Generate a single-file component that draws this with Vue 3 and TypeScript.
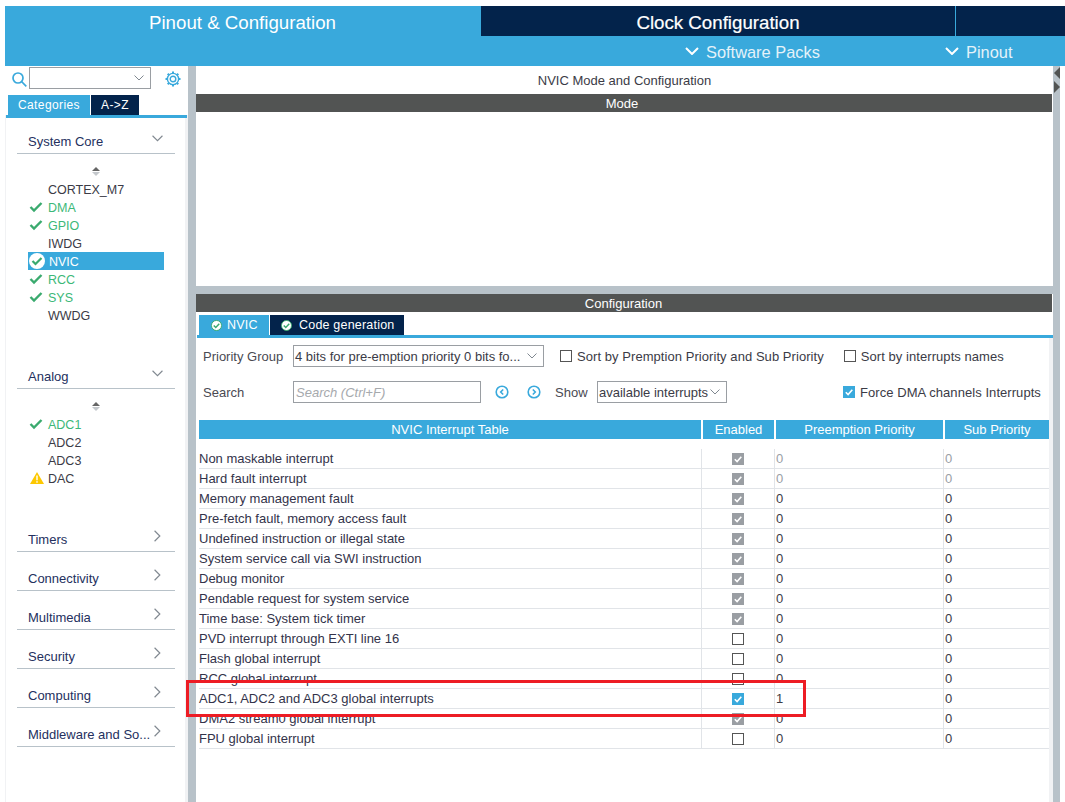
<script setup lang="ts">
interface Item { name: string; state?: 'ok' | 'warn' | 'sel' }
interface Row { name: string; box: 'locked' | 'off' | 'on'; pre: string; sub: string; dim?: boolean }

const core: Item[] = [
  { name: 'CORTEX_M7' }, { name: 'DMA', state: 'ok' }, { name: 'GPIO', state: 'ok' }, { name: 'IWDG' },
  { name: 'NVIC', state: 'sel' }, { name: 'RCC', state: 'ok' }, { name: 'SYS', state: 'ok' }, { name: 'WWDG' },
]
const analog: Item[] = [
  { name: 'ADC1', state: 'ok' }, { name: 'ADC2' }, { name: 'ADC3' }, { name: 'DAC', state: 'warn' },
]
const closed = ['Timers', 'Connectivity', 'Multimedia', 'Security', 'Computing', 'Middleware and So...']
const rows: Row[] = [
  { name: 'Non maskable interrupt', box: 'locked', pre: '0', sub: '0', dim: true },
  { name: 'Hard fault interrupt', box: 'locked', pre: '0', sub: '0', dim: true },
  { name: 'Memory management fault', box: 'locked', pre: '0', sub: '0' },
  { name: 'Pre-fetch fault, memory access fault', box: 'locked', pre: '0', sub: '0' },
  { name: 'Undefined instruction or illegal state', box: 'locked', pre: '0', sub: '0' },
  { name: 'System service call via SWI instruction', box: 'locked', pre: '0', sub: '0' },
  { name: 'Debug monitor', box: 'locked', pre: '0', sub: '0' },
  { name: 'Pendable request for system service', box: 'locked', pre: '0', sub: '0' },
  { name: 'Time base: System tick timer', box: 'locked', pre: '0', sub: '0' },
  { name: 'PVD interrupt through EXTI line 16', box: 'off', pre: '0', sub: '0' },
  { name: 'Flash global interrupt', box: 'off', pre: '0', sub: '0' },
  { name: 'RCC global interrupt', box: 'off', pre: '0', sub: '0' },
  { name: 'ADC1, ADC2 and ADC3 global interrupts', box: 'on', pre: '1', sub: '0' },
  { name: 'DMA2 stream0 global interrupt', box: 'locked', pre: '0', sub: '0' },
  { name: 'FPU global interrupt', box: 'off', pre: '0', sub: '0' },
]
</script>

<template>
  <div class="page">
    <header class="head">
      <div class="tabs">
        <div class="top-tab active">Pinout &amp; Configuration</div>
        <div class="top-tab clock">Clock Configuration</div>
        <div class="top-tab rest"></div>
      </div>
      <div class="subbar">
        <div class="sub-item packs">
          <svg class="sub-chev" viewBox="0 0 14 8"><path d="M1 1l6 6 6-6" /></svg>Software Packs
        </div>
        <div class="sub-item pinout">
          <svg class="sub-chev" viewBox="0 0 14 8"><path d="M1 1l6 6 6-6" /></svg>Pinout
        </div>
      </div>
    </header>

    <div class="work">
      <aside class="side">
        <div class="finder">
          <svg class="lens" viewBox="0 0 15 15"><circle cx="6" cy="6" r="5" /><path d="M9.500 9.500L14.300 14.300" /></svg>
          <div class="find-box">
            <svg class="chev" viewBox="0 0 10 6"><path d="M.5.5L5 5 9.500.5" /></svg>
          </div>
          <svg class="gear" viewBox="0 0 16 16">
            <circle cx="8" cy="8" r="5.600" />
            <circle cx="8" cy="8" r="2.800" />
            <path class="teeth" d="M8 .5v2M8 13.500v2M.5 8h2M13.500 8h2M2.700 2.700l1.400 1.400M11.900 11.900l1.400 1.400M2.700 13.300l1.400-1.400M11.900 4.100l1.400-1.400" />
          </svg>
        </div>
        <div class="side-tabs">
          <div class="side-tab blue">Categories</div>
          <div class="side-tab navy">A-&gt;Z</div>
        </div>
        <div class="cats">
          <div class="cat">
            <span>System Core</span>
            <svg class="cat-chev" viewBox="0 0 10 6"><path d="M.5.5L5 5 9.500.5" /></svg>
          </div>
          <div class="sorter"><i class="up"></i><i class="down"></i></div>
          <ul class="list">
            <li v-for="it in core" :key="it.name" :class="it.state">
              <svg v-if="it.state === 'ok'" class="mark" viewBox="0 0 14 12"><path d="M1.500 6l3.500 3.500L12.500 2" /></svg>
              <svg v-else-if="it.state === 'sel'" class="badge" viewBox="0 0 16 16"><circle cx="8" cy="8" r="8" /><path d="M3.500 8l3 3 6-6" /></svg>
              {{ it.name }}
            </li>
          </ul>

          <div class="cat gap">
            <span>Analog</span>
            <svg class="cat-chev" viewBox="0 0 10 6"><path d="M.5.5L5 5 9.500.5" /></svg>
          </div>
          <div class="sorter"><i class="up"></i><i class="down"></i></div>
          <ul class="list">
            <li v-for="it in analog" :key="it.name" :class="it.state">
              <svg v-if="it.state === 'ok'" class="mark" viewBox="0 0 14 12"><path d="M1.500 6l3.500 3.500L12.500 2" /></svg>
              <svg v-else-if="it.state === 'warn'" class="tri" viewBox="0 0 14 12"><path d="M7 0l7 12H0z" /><rect x="6.300" y="3.500" width="1.400" height="4.800" /><rect x="6.300" y="9.200" width="1.400" height="1.500" /></svg>
              {{ it.name }}
            </li>
          </ul>

          <div v-for="(c, i) in closed" :key="c" class="cat" :class="{ gap: i === 0, near: i > 0 }">
            <span>{{ c }}</span>
            <svg class="cat-chev right" viewBox="0 0 6 10"><path d="M.5.5L5 5 .5 9.500" /></svg>
          </div>
        </div>
      </aside>

      <div class="gutter"></div>

      <main class="main">
        <div class="main-title">NVIC Mode and Configuration</div>
        <div class="bar mode">Mode</div>
        <div class="mode-body"></div>
        <div class="split"></div>
        <div class="bar conf">Configuration</div>
        <div class="cfg-tabs">
          <div class="cfg-tab blue">
            <svg class="tab-ok" viewBox="0 0 12 12"><circle cx="6" cy="6" r="5.500" /><path d="M3 6l2.200 2.200L9 4.200" /></svg>NVIC
          </div>
          <div class="cfg-tab navy">
            <svg class="tab-ok" viewBox="0 0 12 12"><circle cx="6" cy="6" r="5.500" /><path d="M3 6l2.200 2.200L9 4.200" /></svg>Code generation
          </div>
        </div>
        <div class="cfg">
          <div class="form-row first">
            <label class="lbl">Priority Group</label>
            <div class="combo prio">
              <span>4 bits for pre-emption priority 0 bits fo...</span>
              <svg class="chev" viewBox="0 0 10 6"><path d="M.5.5L5 5 9.500.5" /></svg>
            </div>
            <span class="check a"><i class="box off"></i>Sort by Premption Priority and Sub Priority</span>
            <span class="check b"><i class="box off"></i>Sort by interrupts names</span>
          </div>
          <div class="form-row second">
            <label class="lbl">Search</label>
            <div class="combo search">Search (Ctrl+F)</div>
            <svg class="nav n1" viewBox="0 0 14 14"><circle cx="7" cy="7" r="5.800" /><path d="M8.200 4.500L5.700 7l2.500 2.500" /></svg>
            <svg class="nav n2" viewBox="0 0 14 14"><circle cx="7" cy="7" r="5.800" /><path d="M5.800 4.500L8.300 7l-2.500 2.500" /></svg>
            <label class="lbl show">Show</label>
            <div class="combo avail">
              <span>available interrupts</span>
              <svg class="chev" viewBox="0 0 10 6"><path d="M.5.5L5 5 9.500.5" /></svg>
            </div>
            <span class="check c">
              <i class="box on"><svg viewBox="0 0 12 12"><path d="M2.800 6.200l2.300 2.300 4.200-4.700" /></svg></i>Force DMA channels Interrupts
            </span>
          </div>

          <div class="table">
            <div class="thead">
              <div>NVIC Interrupt Table</div>
              <div>Enabled</div>
              <div>Preemption Priority</div>
              <div>Sub Priority</div>
            </div>
            <div v-for="r in rows" :key="r.name" class="tr">
              <div class="td name">{{ r.name }}</div>
              <div class="td mid">
                <i class="box" :class="r.box">
                  <svg v-if="r.box !== 'off'" viewBox="0 0 12 12"><path d="M2.800 6.200l2.300 2.300 4.200-4.700" /></svg>
                </i>
              </div>
              <div class="td num" :class="{ dim: r.dim }">{{ r.pre }}</div>
              <div class="td num" :class="{ dim: r.dim }">{{ r.sub }}</div>
            </div>
          </div>
        </div>
      </main>

      <div class="rail">
        <i class="arrow left"></i>
        <i class="arrow right"></i>
      </div>
    </div>

    <div class="callout"></div>
  </div>
</template>

<style>
html, body { margin: 0; background: #fff; }
</style>

<style scoped>
.page {
  position: relative;
  width: 1065px;
  height: 802px;
  padding-top: 6px;
  box-sizing: border-box;
  overflow: hidden;
  background: #fff;
  color: #3b3b46;
  font-family: "Liberation Sans", Arial, sans-serif;
  font-size: 13px;
}
.head { margin-left: 5px; color: #fff; background: #39a9dc; }
.tabs { display: flex; height: 30px; }
.top-tab { display: flex; align-items: center; justify-content: center; font-size: 18.700px; box-sizing: border-box; padding-top: 3px; }
.active { width: 475px; background: #39a9dc; }
.clock { width: 474px; margin-left: 1px; background: #03234b; -webkit-text-stroke: .2px #fff; }
.rest { flex: 1; margin-left: 1px; background: #03234b; }
.subbar { display: flex; height: 30px; position: relative; font-size: 16.400px; color: #e4f2f9; }
.sub-item { display: flex; align-items: center; padding-top: 3px; box-sizing: border-box; }
.sub-item svg { margin-top: -3px; }
.packs { margin-left: 680px; width: 260px; }
.sub-chev { width: 14px; height: 8px; margin-right: 7px; fill: none; stroke: #fff; stroke-width: 2; }

.work { display: flex; height: 736px; }
.side { width: 183px; margin-left: 5px; background: #f1f2f4; }
.finder { display: flex; align-items: center; height: 29px; background: #fff; margin-left: -5px; width: 188px; box-sizing: border-box; }
.lens { width: 15px; height: 15px; margin-left: 12px; margin-top: -3px; fill: none; stroke: #39a9dc; stroke-width: 1.700; flex: none; }
.find-box {
  width: 122px; height: 22px; box-sizing: border-box; margin-left: 2px; margin-top: -5px;
  border: 1px solid #9a9ea3; display: flex; align-items: center; justify-content: flex-end; padding-right: 6px; background: #fff; flex: none;
}
.gear { width: 16px; height: 16px; margin-left: 14px; margin-top: -3px; fill: none; stroke: #39a9dc; stroke-width: 1.400; flex: none; }
.gear .teeth { stroke-width: 2; }
.side-tabs { display: flex; height: 20px; background: #fff; margin-left: -5px; padding-left: 8px; width: 188px; box-sizing: border-box; }
.side-tab { display: flex; align-items: center; justify-content: center; color: #fff; font-size: 12px; letter-spacing: .4px; padding-bottom: 1px; box-sizing: border-box; }
.side-tab.blue { width: 82px; background: #39a9dc; }
.side-tab.navy { width: 48px; margin-left: 1px; background: #03234b; }
.cats {
  margin-left: 1px; width: 179px; height: 687px; box-sizing: border-box; padding-top: 12px;
  border-top: 3px solid #39a9dc; background: #fff; position: relative;
}
.cats::before { content: ""; position: absolute; left: 0; top: -3px; width: 181px; height: 3px; background: #39a9dc; }
.cat {
  display: flex; justify-content: space-between; align-items: center; box-sizing: border-box;
  margin-left: 11px; width: 158px; height: 24px; padding: 0 12px 0 11px;
  border-bottom: 1px solid #b8c2c9; color: #24305e; white-space: nowrap;
}
.cat.gap { margin-top: 41px; }
.cat.near { margin-top: 15px; }
.cat-chev { width: 11px; height: 7px; margin-top: -7px; fill: none; stroke: #808890; stroke-width: 1; flex: none; }
.cat-chev.right { width: 7px; height: 12px; margin-right: 2px; margin-top: -7px; }
.sorter { height: 26px; display: flex; flex-direction: column; align-items: center; justify-content: flex-end; padding-bottom: 4px; box-sizing: border-box; width: 179px; }
.sorter i { width: 0; height: 0; border-left: 4px solid transparent; border-right: 4px solid transparent; display: block; }
.sorter .up { border-bottom: 4px solid #666; margin-bottom: 1px; }
.sorter .down { border-top: 4px solid #c4c8cc; }
.list { list-style: none; margin: 0; padding: 0 0 0 22px; font-size: 12.500px; }
.list li { position: relative; height: 18px; line-height: 20px; width: 136px; padding-left: 20px; box-sizing: border-box; }
.list li.ok { color: #3cb878; }
.list li.sel { background: #39a9dc; color: #fff; padding-left: 21px; }
.mark { position: absolute; left: 1px; top: 3px; width: 14px; height: 12px; fill: none; stroke: #3aaa6e; stroke-width: 2.400; }
.badge { position: absolute; left: 1px; top: 1px; width: 16px; height: 16px; }
.badge circle { fill: #fff; }
.badge path { fill: none; stroke: #3aaa6e; stroke-width: 2.200; }
.tri { position: absolute; left: 2px; top: 3px; width: 14px; height: 12px; }
.tri path { fill: #fdc800; }
.tri rect { fill: #fff; }

.gutter { width: 8px; background: #b8c2c9; }
.main { width: 857px; display: flex; flex-direction: column; background: #fff; }
.main-title { height: 28px; line-height: 29px; text-align: center; }
.bar { height: 18px; line-height: 19px; text-align: center; background: #525453; color: #fff; flex: none; margin-right: 1px; }
.bar.mode { padding-right: 4px; }
.bar.conf { padding-right: 1px; }
.mode-body { height: 174px; flex: none; }
.split { height: 8px; background: #b8c2c9; flex: none; }
.cfg-tabs { display: flex; height: 23px; align-items: flex-end; padding-left: 3px; flex: none; }
.cfg-tab { height: 20px; display: flex; align-items: center; color: #fff; box-sizing: border-box; letter-spacing: .2px; font-size: 12.500px; white-space: nowrap; }
.cfg-tab.blue { width: 70px; padding-left: 12px; background: #39a9dc; margin-right: 1px; }
.cfg-tab.blue .tab-ok { margin-right: 5px; }
.cfg-tab.navy { width: 134px; padding-left: 11px; background: #03234b; }
.tab-ok { width: 11px; height: 11px; margin-right: 7px; flex: none; }
.tab-ok circle { fill: #fff; stroke: #3aaa6e; stroke-width: 1; }
.tab-ok path { fill: none; stroke: #3aaa6e; stroke-width: 1.600; }
.cfg {
  flex: 1; margin-left: 1px; border-top: 3px solid #39a9dc; position: relative;
  display: flex; flex-direction: column; background: #fff; box-sizing: border-box;
}
.cfg::after { content: ""; position: absolute; top: 0; bottom: 0; right: 0; width: 4px; background: #f1f2f4; }
.form-row { display: flex; align-items: center; flex: none; white-space: nowrap; }
.form-row.first { height: 22px; margin-top: 7px; }
.form-row.second { height: 22px; margin-top: 14px; }
.lbl { margin-left: 6px; width: 90px; color: #4a4a52; flex: none; }
.combo {
  height: 22px; box-sizing: border-box; border: 1px solid #9a9ea3; display: flex; align-items: center;
  justify-content: space-between; padding: 0 6px 0 1px; flex: none;
}
.prio { width: 251px; }
.search { width: 188px; color: #a6a9ad; font-style: italic; padding-left: 2px; }
.avail { width: 130px; }
.chev { width: 10px; height: 6px; fill: none; stroke: #808890; stroke-width: 1; flex: none; }
.check { display: flex; align-items: center; white-space: nowrap; flex: none; letter-spacing: .06px; }
.check .box { margin-right: 5px; }
.check.a { margin-left: 16px; }
.check.b { margin-left: 20px; }
.check.c { margin-left: 116px; }
.box { display: inline-block; width: 12px; height: 12px; box-sizing: border-box; flex: none; }
.box svg { display: block; width: 12px; height: 12px; fill: none; stroke: #fff; stroke-width: 1.600; }
.box.off { border: 1px solid #555; background: #fff; }
.box.on { background: #39a9dc; }
.box.locked { background: #9a9ea3; }
.nav { width: 14px; height: 14px; fill: none; stroke: #39a9dc; stroke-width: 1.600; flex: none; }
.n1 { margin-left: 14px; }
.n2 { margin-left: 18px; }
.lbl.show { margin-left: 14px; width: 42px; }

.table { margin-left: 2px; margin-top: 17px; width: 850px; flex: none; }
.thead { display: grid; grid-template-columns: 504px 73px 169px 104px; height: 18px; margin-bottom: 11px; }
.thead div { background: #39a9dc; color: #fff; line-height: 19px; text-align: center; margin-right: 2px; }
.thead div:last-child { margin-right: 0; }
.tr { display: grid; grid-template-columns: 502px 73px 169px 106px; height: 20px; border-bottom: 1px solid #e1e4e8; box-sizing: border-box; }
.td { line-height: 19px; border-left: 1px solid #e1e4e8; white-space: nowrap; }
.td.name { border-left: 0; color: #33334a; }
.td.mid { display: flex; align-items: center; justify-content: center; }
.td.num { color: #3b3b46; padding-left: 1px; }
.td.num.dim { color: #9aa0a6; }

.rail { width: 7px; background: #b8c2c9; position: relative; display: flex; flex-direction: column; padding-top: 1px; box-sizing: border-box; align-items: flex-end; }
.arrow { display: block; width: 0; height: 0; border-top: 6.500px solid transparent; border-bottom: 6.500px solid transparent; margin-bottom: 2px; }
.arrow.left { border-right: 6px solid #525453; }
.arrow.right { border-left: 6px solid #525453; }

.callout {
  position: absolute; left: 186px; top: 680px; width: 620px; height: 37px;
  box-sizing: border-box; border: 3px solid #ed1c24; pointer-events: none;
}
</style>
